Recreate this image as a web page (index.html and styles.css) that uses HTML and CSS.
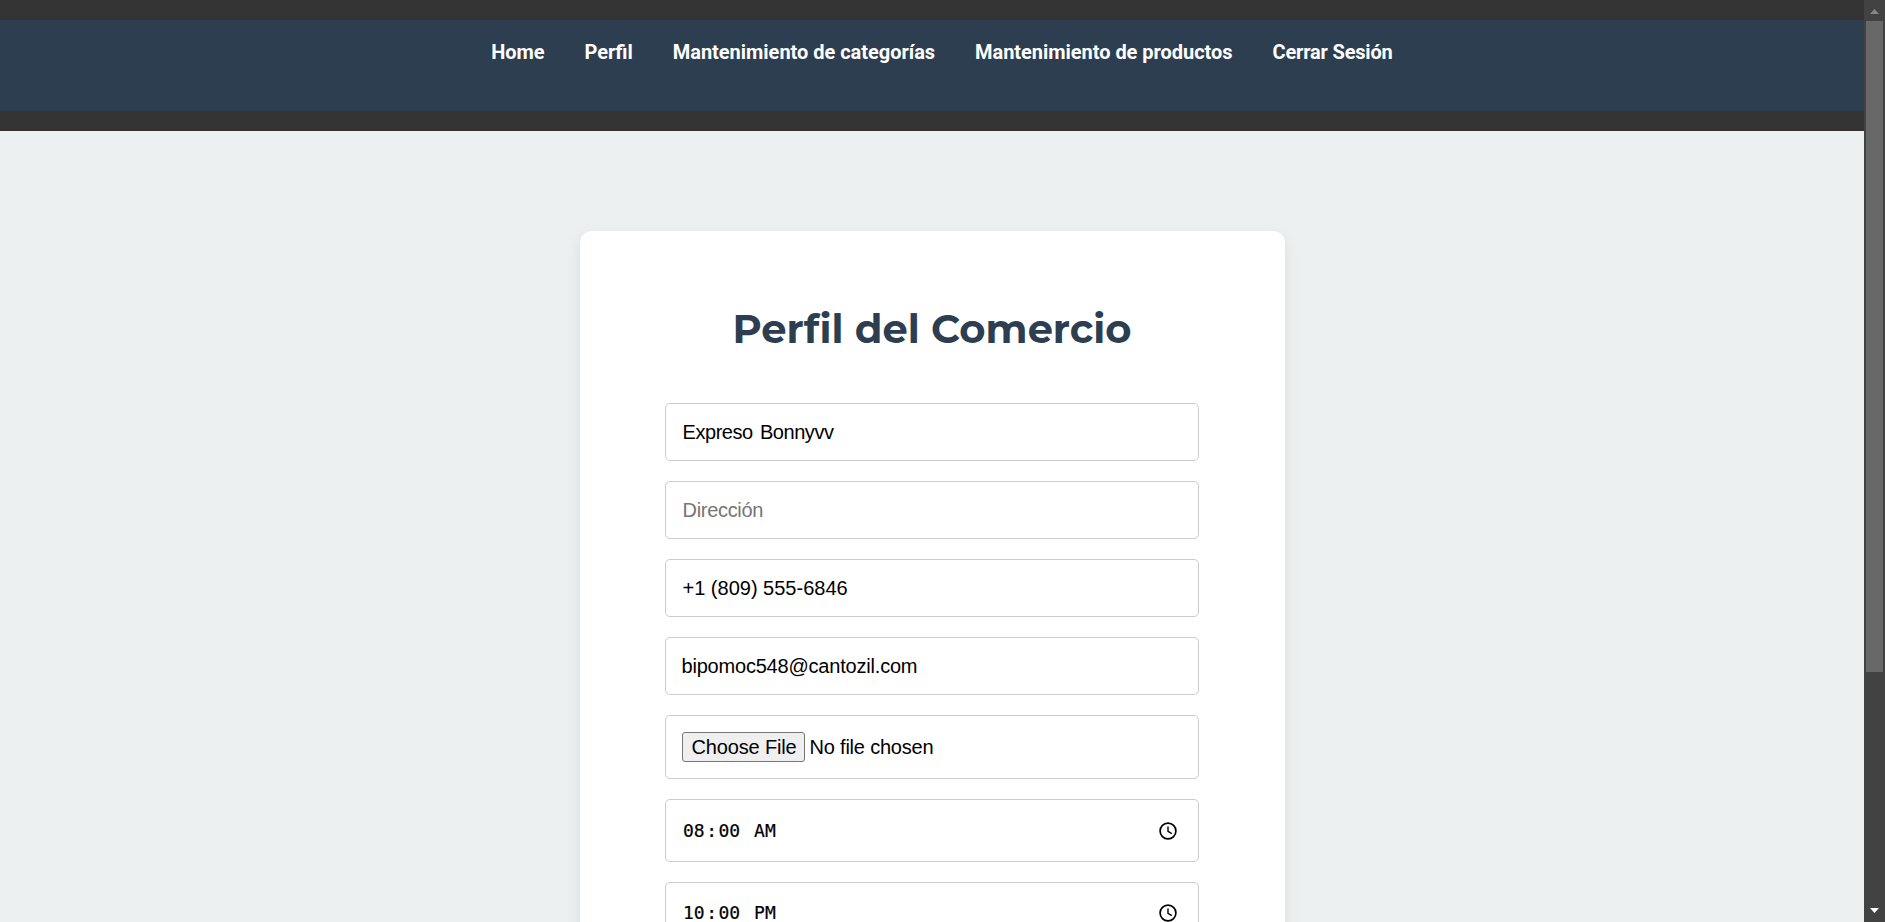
FILE: index.html
```html
<!DOCTYPE html>
<html lang="es">
<head>
<meta charset="utf-8">
<title>Perfil del Comercio</title>
<link rel="stylesheet" href="styles.css">
</head>
<body>
<div class="page">
  <header class="header">
    <nav class="nav">
      <a class="nav-link nav-home">Home</a>
      <a class="nav-link nav-profile">Perfil</a>
      <a class="nav-link nav-categories">Mantenimiento de categorías</a>
      <a class="nav-link nav-products">Mantenimiento de productos</a>
      <a class="nav-link nav-logout">Cerrar Sesión</a>
    </nav>
  </header>
  <main class="main">
    <form class="card">
      <h1 class="title">Perfil del Comercio</h1>
      <input class="field field-name" type="text" value="Expreso Bonnyvv">
      <input class="field field-address" type="text" placeholder="Dirección">
      <input class="field field-phone" type="text" value="+1 (809) 555-6846">
      <input class="field field-email" type="text" value="bipomoc548@cantozil.com">
      <div class="field field-file"><button class="file-button" type="button">Choose File</button><span class="file-name">No file chosen</span></div>
      <div class="field field-time">
        <span class="time"><span class="part">08</span>:<span class="part">00</span> <span class="part">AM</span></span>
        <svg class="clock" viewBox="0 0 18 18"><circle cx="9" cy="9" r="7.9"/><path d="M9 4.6V9.3L12.8 11.6"/></svg>
      </div>
      <div class="field field-time field-closing">
        <span class="time"><span class="part">10</span>:<span class="part">00</span> <span class="part">PM</span></span>
        <svg class="clock" viewBox="0 0 18 18"><circle cx="9" cy="9" r="7.9"/><path d="M9 4.6V9.3L12.8 11.6"/></svg>
      </div>
    </form>
  </main>
</div>
<aside class="scrollbar">
  <svg class="arrow arrow-up" viewBox="0 0 9 5"><path d="M0 5L4.5 0L9 5Z"/></svg>
  <div class="thumb"></div>
  <svg class="arrow arrow-down" viewBox="0 0 9 5"><path d="M0 0L4.5 5L9 0Z"/></svg>
</aside>
</body>
</html>
```
FILE: styles.css
```css
* { box-sizing: border-box; }
body {
  margin: 0;
  height: 922px;
  display: flex;
  overflow: hidden;
  background: #ecf0f1;
  font-family: Roboto, "Liberation Sans", sans-serif;
}
.page { flex: 1; height: 922px; overflow: hidden; }
.header { height: 131px; padding: 20px 0; background: #333; }
.nav {
  height: 91px;
  padding: 20px 0 0 20px;
  display: flex;
  justify-content: center;
  gap: 40px;
  background: #2c3e50;
}
.nav-link { color: #fff; font-size: 20px; font-weight: 700; line-height: 25px; white-space: nowrap; }
.nav-home { letter-spacing: -0.12px; }
.nav-categories { letter-spacing: -0.03px; }
.nav-products { letter-spacing: -0.04px; }
.nav-logout { letter-spacing: -0.17px; }
.main { padding-top: 100px; display: flex; justify-content: center; }
.card {
  width: 705px;
  height: 900px;
  padding: 75px 85px;
  display: flex;
  flex-direction: column;
  gap: 20px;
  background: #fff;
  border-radius: 12px;
  box-shadow: 0 5px 15px rgba(0, 0, 0, 0.08);
}
.title {
  margin: -2px 0 30px;
  height: 49px;
  line-height: 49px;
  text-align: center;
  white-space: nowrap;
  color: #2c3e50;
  font-family: Montserrat, Inter, sans-serif;
  font-size: 40px;
  font-weight: 700;
  font-variant-ligatures: none;
}
.field {
  width: 534px;
  height: 58px;
  flex: none;
  padding: 0 16px;
  border: 1px solid #ccc;
  border-radius: 5px;
  background: #fff;
  color: #000;
  font-family: "Liberation Sans", Arial, sans-serif;
  font-size: 20px;
}
.field::placeholder { color: #757575; }
.field-name { padding-left: 17px; letter-spacing: -0.44px; word-spacing: 2px; }
.field-address { padding-left: 17px; letter-spacing: -0.3px; }
.field-phone { padding-left: 17px; }
.field-email { letter-spacing: -0.2px; }
.field-file { height: 64px; display: flex; align-items: center; }
.file-button {
  width: 123px;
  height: 30px;
  padding: 0 0 0 2px;
  border: 1px solid #767676;
  border-radius: 3px;
  background: #efefef;
  color: #000;
  font: inherit;
  line-height: 26px;
  letter-spacing: -0.15px;
}
.file-name { margin-left: 5px; letter-spacing: -0.2px; }
.field-time { height: 63px; display: flex; align-items: center; justify-content: space-between; }
.field-closing { padding-bottom: 2px; }
.time { font-family: Consolas, "DejaVu Sans Mono", monospace; font-size: 18px; -webkit-text-stroke: 0.2px #000; }
.part { padding: 0 1.5px; }
.clock { width: 18px; height: 18px; margin-right: 5px; fill: none; stroke: #000; stroke-width: 1.7; }
.clock path { stroke-width: 1.4; }
.scrollbar {
  width: 21px;
  height: 922px;
  padding: 9px 2px;
  display: flex;
  flex-direction: column;
  background: #424242;
}
.thumb { width: 17px; height: 651px; margin-top: 7px; background: #686868; }
.arrow { width: 9px; height: 5px; margin-left: 4px; flex: none; }
.arrow-up { fill: #868686; }
.arrow-down { margin-top: auto; fill: #fff; }
```
